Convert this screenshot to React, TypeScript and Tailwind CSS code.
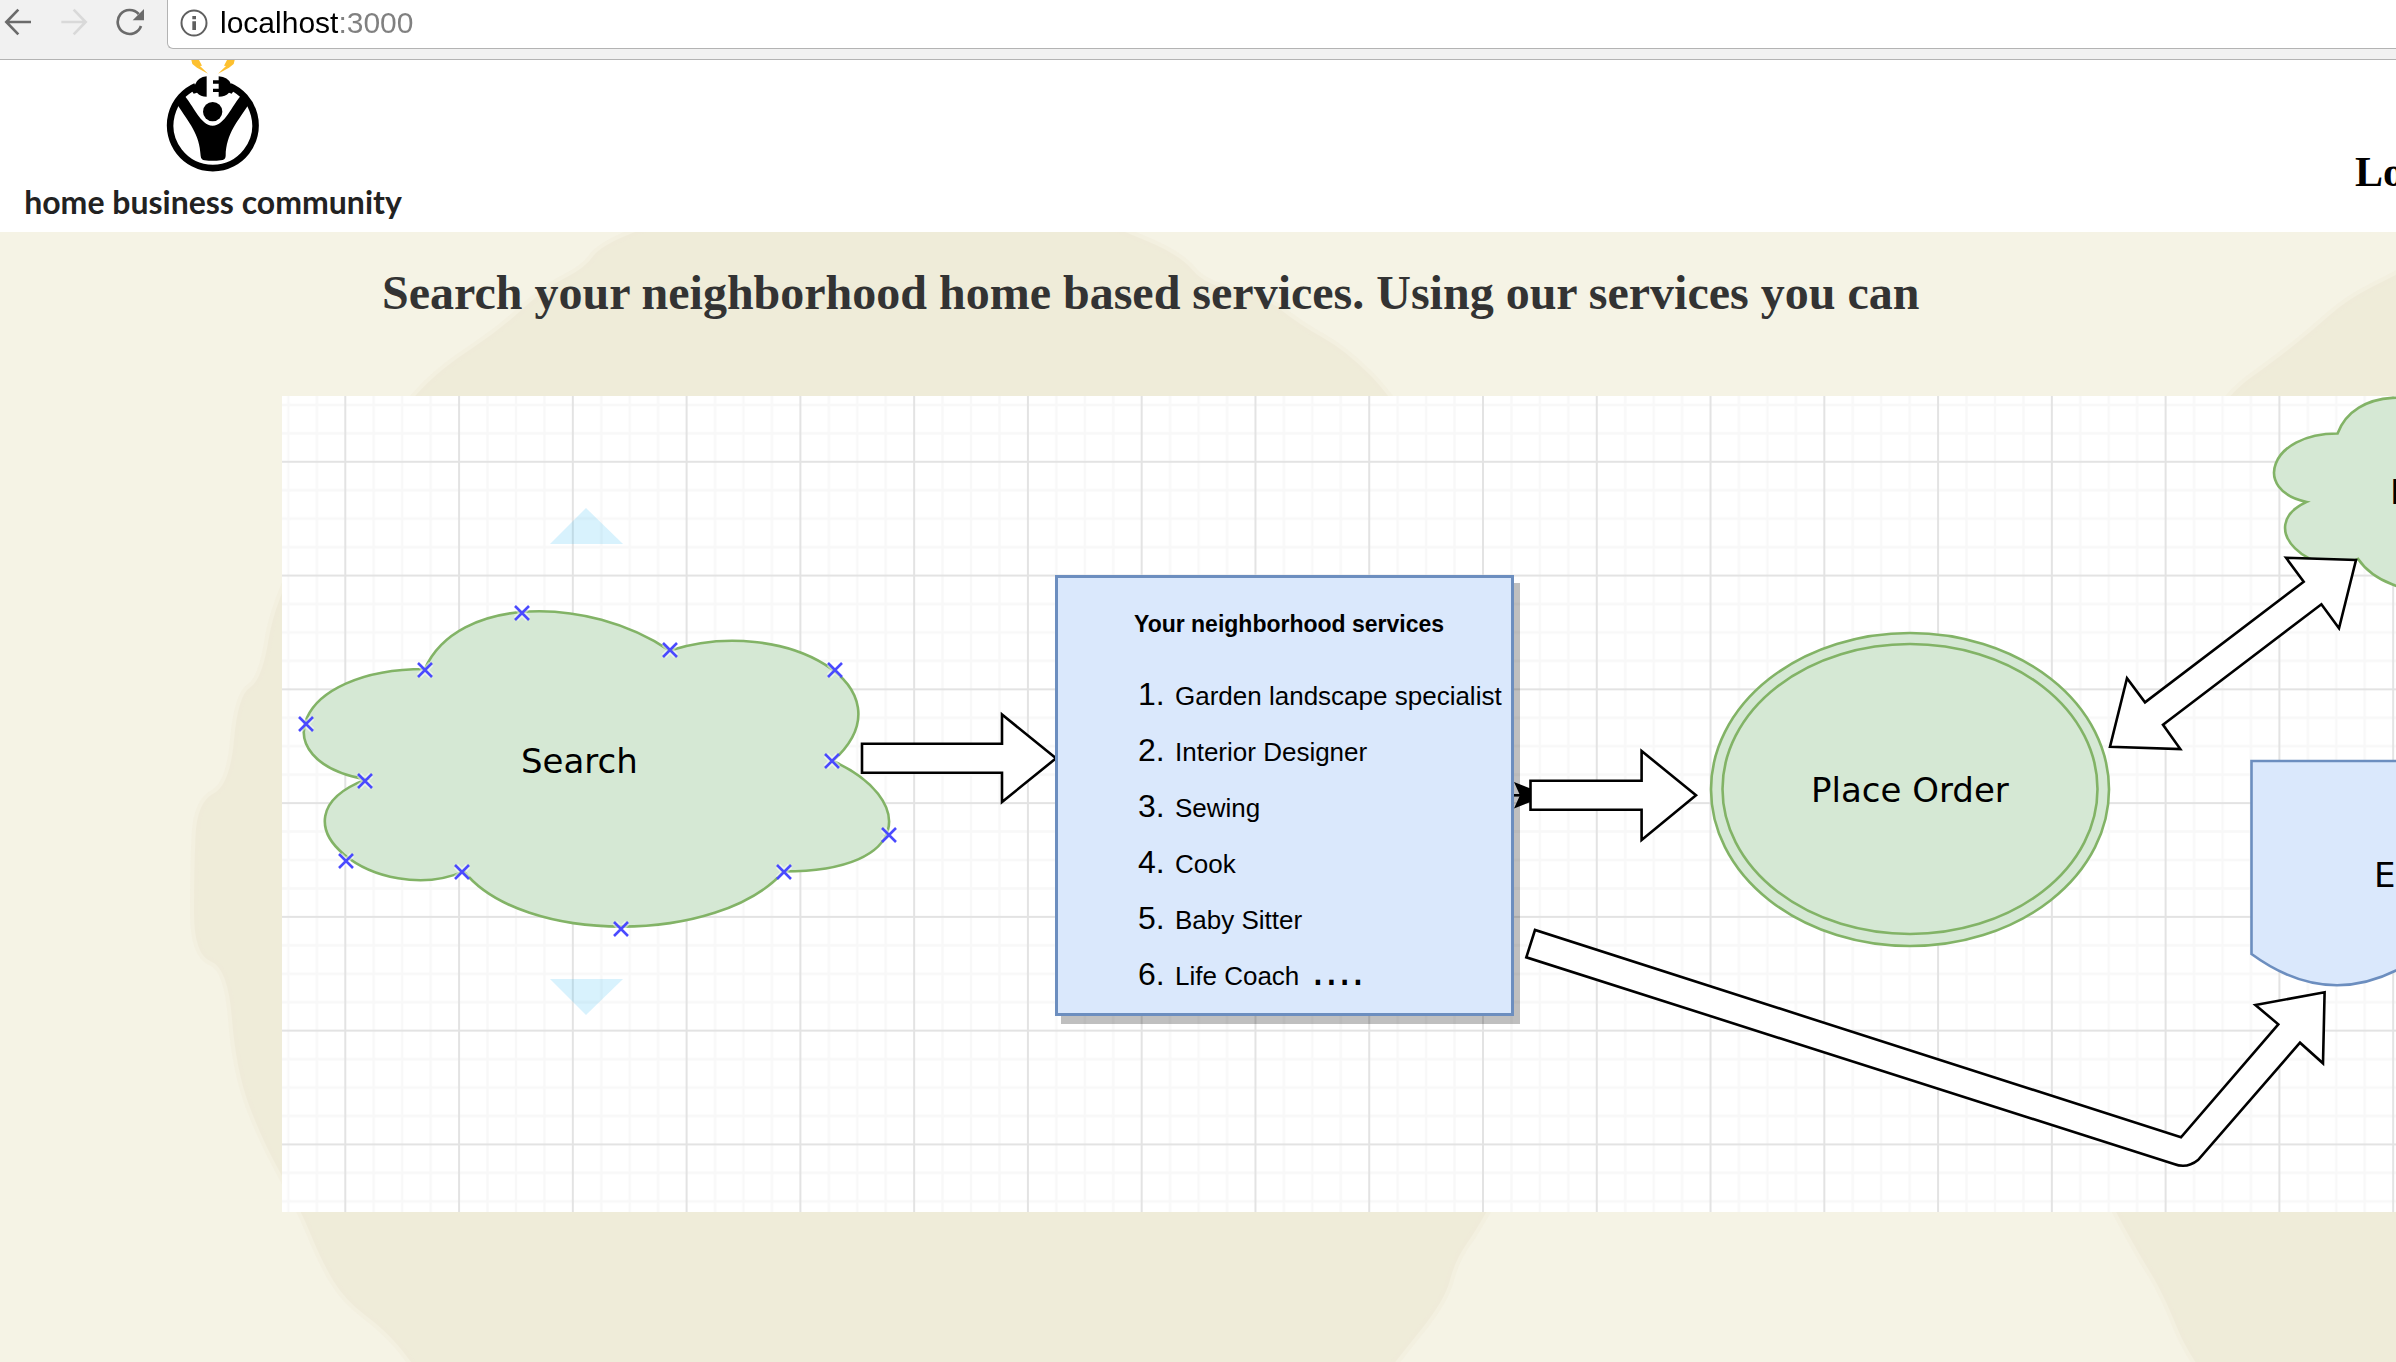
import React from "react";

const services = [
  "Garden landscape specialist",
  "Interior Designer",
  "Sewing",
  "Cook",
  "Baby Sitter",
  "Life Coach",
];

const anchors = [
  [425, 670],
  [522, 613],
  [670, 650],
  [835, 670],
  [832, 761],
  [889, 835],
  [784, 872],
  [621, 929],
  [462, 872],
  [346, 861],
  [365, 781],
  [306, 724],
];

function cloudPath(x: number, y: number, w: number, h: number) {
  const p = (a: number, b: number) => `${x + a * w},${y + b * h}`;
  return [
    `M${p(0.25, 0.25)}`,
    `C${p(0.05, 0.25)} ${p(0, 0.5)} ${p(0.16, 0.55)}`,
    `C${p(0, 0.66)} ${p(0.18, 0.9)} ${p(0.31, 0.8)}`,
    `C${p(0.4, 1)} ${p(0.7, 1)} ${p(0.8, 0.8)}`,
    `C${p(1, 0.8)} ${p(1, 0.6)} ${p(0.875, 0.5)}`,
    `C${p(1, 0.3)} ${p(0.8, 0.1)} ${p(0.625, 0.2)}`,
    `C${p(0.5, 0.05)} ${p(0.3, 0.05)} ${p(0.25, 0.25)}Z`,
  ].join(" ");
}

function smoothPath(points: number[][]) {
  const n = points.length;
  const mid = (i: number) => {
    const a = points[i % n];
    const b = points[(i + 1) % n];
    return `${(a[0] + b[0]) / 2},${(a[1] + b[1]) / 2}`;
  };
  let d = `M${mid(n - 1)}`;
  for (let i = 0; i < n; i++) d += `Q${points[i][0]},${points[i][1]} ${mid(i)}`;
  return d + "Z";
}

const leftBlob = [
  [760, 190], [660, 222], [600, 246], [585, 268], [545, 288], [500, 330], [445, 366], [410, 400],
  [330, 500], [275, 600], [262, 680], [238, 695], [230, 785], [197, 802], [194, 870], [194, 955],
  [228, 968], [236, 1070], [262, 1140], [300, 1208], [322, 1262], [345, 1300], [385, 1330],
  [412, 1362], [450, 1420], [900, 1500], [1350, 1420], [1395, 1362], [1445, 1300], [1455, 1260],
  [1480, 1225], [1560, 1080], [1590, 880], [1560, 640], [1395, 400], [1345, 350], [1300, 325],
  [1262, 295], [1205, 285], [1180, 255], [1116, 228], [1020, 190],
];

const rightBlob = [
  [2460, 240], [2396, 275], [2348, 299], [2313, 330], [2278, 358], [2220, 400], [2080, 600],
  [2010, 880], [2060, 1100], [2112, 1205], [2139, 1254], [2163, 1293], [2191, 1362], [2260, 1440],
  [2460, 1440],
];

function Toolbar() {
  return (
    <div className="flex h-[60px] items-start border-b border-[#b3b3b3] bg-[#f1f1f1]">
      <nav className="flex h-[43px] w-[167px] shrink-0 items-center gap-7 pl-1">
        <button aria-label="Back" className="h-7 w-7">
          <svg viewBox="0 0 84 84" className="h-7 w-7" fill="none" stroke="#6b6b6b" strokeWidth="8">
            <path d="M81 42H8M43 5L7 42L43 79" />
          </svg>
        </button>
        <button aria-label="Forward" className="h-7 w-7">
          <svg viewBox="0 0 84 84" className="h-7 w-7" fill="none" stroke="#d9d9d9" strokeWidth="8">
            <path d="M4 42H76M41 5L77 42L41 79" />
          </svg>
        </button>
        <button aria-label="Reload" className="h-7 w-7">
          <svg viewBox="0 0 84 84" className="h-7 w-7">
            <path d="M75 54A36 36 0 1 1 68 18" fill="none" stroke="#6b6b6b" strokeWidth="8" />
            <path d="M84 3V37H50Z" fill="#6b6b6b" />
          </svg>
        </button>
      </nav>
      <div className="flex h-[49px] flex-1 items-center rounded-bl-md border-b border-l border-[#b3b3b3] bg-white pb-[3px] pl-3">
        <svg viewBox="0 0 84 84" className="h-7 w-7 shrink-0">
          <circle cx="42" cy="42" r="37.5" fill="none" stroke="#5f5f5f" strokeWidth="6" />
          <path d="M37 21h11v10H37zM37 37h11v26H37z" fill="#5f5f5f" />
        </svg>
        <input
          aria-label="Address"
          defaultValue="localhost:3000"
          className="ml-3 h-10 w-full bg-[linear-gradient(90deg,#000_118px,#808080_118px)] bg-clip-text font-['Liberation_Sans',sans-serif] text-[30px] leading-10 text-transparent outline-none"
        />
      </div>
    </div>
  );
}

function Logo() {
  return (
    <a href="#" className="flex w-[386px] flex-col items-center">
      <svg viewBox="480 180 324 342" className="h-[114px] w-[108px]">
        <g fill="#fdc02f">
          <path d="M577 180H600L609 197L603 198L627 221L594 203L580 192Z" />
          <path d="M707 180H684L675 197L681 198L657 221L690 203L704 192Z" />
        </g>
        <path d="M590 259A128 128 0 1 0 693 259" fill="none" stroke="#000" strokeWidth="20" />
        <path d="M623 229Q597 231 588 254L572 262L584 281L594 278Q604 290 623 290Z" />
        <path d="M659 229Q687 231 696 252L712 262L698 281L690 278Q680 290 659 290V276H642V266H659V251H642V241H659Z" />
        <path d="M534 312L552 282C585 318 604 376 641 377C678 376 697 318 730 282L750 312C718 362 681 400 680 468Q679 481 665 481Q641 484 617 481Q606 480 605 468C602 400 570 370 534 312Z" />
        <circle cx="641" cy="335" r="29" />
      </svg>
      <span className="pt-px font-['Lato',sans-serif] text-[32px] leading-[54px] font-bold whitespace-nowrap text-[#222222]">
        home business community
      </span>
    </a>
  );
}

function Backdrop() {
  return (
    <svg
      viewBox="0 232 2396 1130"
      className="absolute top-0 left-0 h-[1130px] w-[2396px] max-w-none"
      fill="#efecd9"
      stroke="#efecd9"
      strokeOpacity="0.4"
      strokeWidth="8"
    >
      <path d={smoothPath(leftBlob)} />
      <path d={smoothPath(rightBlob)} />
    </svg>
  );
}

function Shapes() {
  return (
    <svg
      viewBox="282 396 2114 816"
      className="absolute top-0 left-0 h-[816px] w-[2114px] max-w-none"
      strokeWidth="2.6"
    >
      <defs>
        <pattern id="grid" x="345.3" y="461.8" width="113.77" height="113.77" patternUnits="userSpaceOnUse">
          <path
            d="M28.4 0V113.8M56.9 0V113.8M85.3 0V113.8M0 28.4H113.8M0 56.9H113.8M0 85.3H113.8"
            stroke="#f8f8f8"
            strokeWidth="2.4"
          />
          <path d="M0 0V113.8M0 0H113.8M113.77 0V113.8M0 113.77H113.8" stroke="#e3e3e3" strokeWidth="2" />
        </pattern>
      </defs>
      <rect x="282" y="396" width="2114" height="816" fill="url(#grid)" />
      <g fill="#29b6f2" opacity="0.18">
        <path d="M550 544H623L586 508Z" />
        <path d="M550 979H623L586 1015Z" />
      </g>
      <g fill="#d5e8d4" stroke="#82b366">
        <path d={cloudPath(261.5, 577, 653, 368)} />
        <path d={cloudPath(2251.8, 376.5, 343, 228)} />
        <ellipse cx="1910" cy="789.5" rx="199" ry="156.5" />
        <ellipse cx="1910" cy="789" rx="187.5" ry="145" />
      </g>
      <path d="M2251.5 761H2423V954Q2337 1016.5 2251.5 954Z" fill="#dae8fc" stroke="#6c8ebf" />
      <path d="M1513 795.3H1524" stroke="#000" />
      <path d="M1514 782L1548 795.3L1514 808.5L1520 795.3Z" />
      <g fill="#fff" stroke="#000">
        <path d="M862 743.7H1002V714.5L1056 758.3L1002 802V772.7H862Z" />
        <path d="M1530.5 780.7H1641.6V751L1696 795.3L1641.6 840V809.7H1530.5Z" />
        <path d="M2286 557.7L2356 560L2339 628.3L2321.4 604.3L2163 724.7L2180.3 749L2110 746.7L2127 678.3L2145 702.3L2303.7 581.7Z" />
        <path d="M1535 930L1526.3 957.3L2174 1164Q2187 1169 2198 1160L2300 1042.7L2323 1063.3L2324.6 992.3L2255.4 1005L2278.3 1024.3L2181 1137.3Z" />
      </g>
      <g stroke="#fff" strokeWidth="6" opacity="0.5">
        {anchors.map(([x, y]) => (
          <path key={`${x}-${y}`} d={`M${x - 6} ${y - 6}L${x + 6} ${y + 6}M${x + 6} ${y - 6}L${x - 6} ${y + 6}`} />
        ))}
      </g>
      <g stroke="#4a4aff" strokeWidth="2.6">
        {anchors.map(([x, y]) => (
          <path key={`${x}-${y}`} d={`M${x - 7} ${y - 7}L${x + 7} ${y + 7}M${x + 7} ${y - 7}L${x - 7} ${y + 7}`} />
        ))}
      </g>
    </svg>
  );
}

function Label({ place, children }: { place: string; children: React.ReactNode }) {
  return (
    <span
      className={`absolute font-['DejaVu_Sans',sans-serif] text-[34px] leading-10 whitespace-nowrap text-black ${place}`}
    >
      {children}
    </span>
  );
}

function ServicesCard() {
  return (
    <div className="absolute top-[179px] left-[773px] h-[441px] w-[459px] border-3 border-[#6c8ebf] bg-[#dae8fc] pt-7 pl-20 font-['Liberation_Sans',sans-serif] text-black shadow-[6px_8px_0_rgba(0,0,0,0.25)]">
      <h2 className="-ml-1 text-[23px] leading-9 font-bold whitespace-nowrap">Your neighborhood services</h2>
      <ol className="mt-6">
        {services.map((name, i) => (
          <li key={name} className="flex h-14 items-baseline leading-[56px] whitespace-nowrap">
            <span className="w-[37px] text-[32px]">{i + 1}.</span>
            <span className="text-[26px]">{name}</span>
            {i === services.length - 1 && (
              <span className="ml-3 font-['DejaVu_Sans',sans-serif] text-[42px] leading-none">....</span>
            )}
          </li>
        ))}
      </ol>
    </div>
  );
}

export default function App() {
  return (
    <div className="flex min-h-screen flex-col overflow-hidden bg-white">
      <Toolbar />
      <header className="flex h-[172px] items-start justify-between pl-5">
        <Logo />
        <a
          href="#"
          className="mt-[88px] w-[41px] font-['Liberation_Serif',serif] text-[42px] leading-[48px] font-bold whitespace-nowrap text-black"
        >
          Lo
        </a>
      </header>
      <main className="relative flex-1 overflow-hidden bg-[#f5f3e5]">
        <Backdrop />
        <h1 className="relative flex h-[164px] items-start pt-[33px] pl-[382px] font-['Liberation_Serif',serif] text-[48px] leading-[56px] font-bold whitespace-nowrap text-[#333333]">
          Search your neighborhood home based services. Using our services you can
        </h1>
        <section className="relative ml-[282px] h-[816px] overflow-hidden bg-white">
          <Shapes />
          <Label place="top-[345px] left-[239px]">Search</Label>
          <ServicesCard />
          <Label place="top-[374px] left-[1529px]">Place Order</Label>
          <Label place="top-[76px] left-[2108px]">P</Label>
          <Label place="top-[459px] left-[2092px]">E</Label>
        </section>
      </main>
    </div>
  );
}
